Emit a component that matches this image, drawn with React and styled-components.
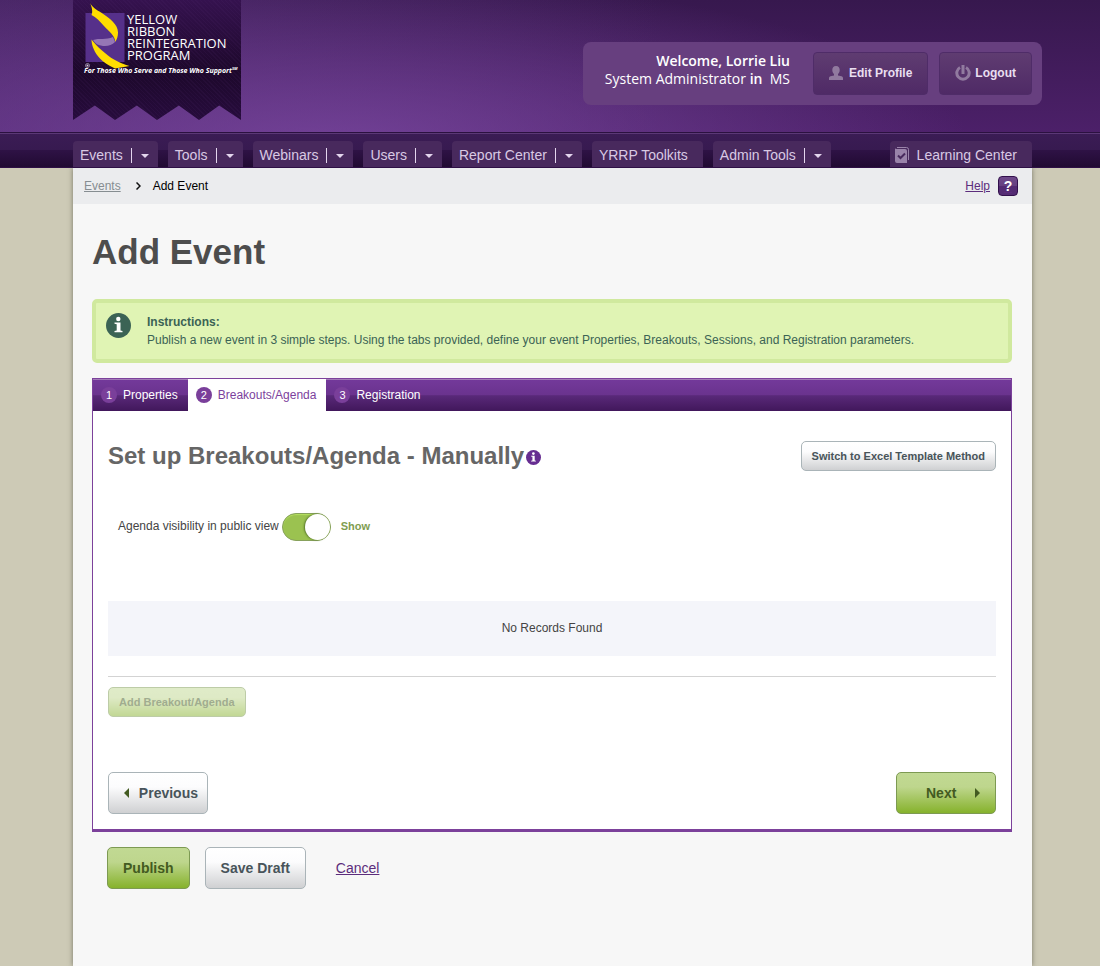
import { useState } from "react";
import styled, { createGlobalStyle } from "styled-components";

const GlobalStyle = createGlobalStyle`
    * {
        box-sizing: border-box;
    }

    body {
        margin: 0;
        background: #cdcab6;
        color: #444;
        font-family: "Liberation Sans", Arial, sans-serif;
        font-size: 12px;
        line-height: 18px;
    }

    button {
        font-family: inherit;
        cursor: pointer;
    }
`;

const Page = styled.div`
    display: flex;
    flex-direction: column;
    min-height: 100vh;
`;

const Wrapper = styled.div`
    width: 100%;
    max-width: 964px;
    margin: 0 auto;
    padding-left: 5px;
`;

const Header = styled.header`
    height: 132px;
    background:
        radial-gradient(ellipse 640px 170px at 30% 110%, rgba(122, 72, 160, 0.8), rgba(90, 48, 130, 0) 100%),
        linear-gradient(90deg, rgba(94, 54, 130, 0.5) 0%, rgba(60, 25, 90, 0) 60%),
        linear-gradient(180deg, #37184e 0%, #4c2069 100%);
`;

const HeaderRow = styled(Wrapper)`
    display: flex;
    justify-content: space-between;
    align-items: flex-start;
`;

const Banner = styled.a`
    display: flex;
    flex-direction: column;
    width: 168px;
    height: 120px;
    padding: 3px 0 0 11px;
    color: #fff;
    text-decoration: none;
    background:
        repeating-linear-gradient(45deg, rgba(90, 50, 120, 0.1) 0 1px, transparent 1px 3px),
        linear-gradient(180deg, #35124f 0%, #1d082b 60%, #270c3d 100%);
    clip-path: polygon(0 0, 100% 0, 100% 100%, 87% 88%, 75% 100%, 63% 88%, 50% 100%, 38% 88%, 25% 100%, 13% 88%, 0 100%);
`;

const LogoRow = styled.div`
    display: flex;
`;

const LogoName = styled.div`
    margin: 10px 0 0 -3px;
    font-family: "Open Sans", "Noto Sans", sans-serif;
    font-size: 13px;
    line-height: 12px;
`;

const Tagline = styled.div`
    font-family: "Open Sans", "Noto Sans", sans-serif;
    font-size: 7px;
    font-weight: bold;
    font-style: italic;
    line-height: 10px;
    white-space: nowrap;
    margin-top: -3px;

    sup {
        font-size: 4px;
        line-height: 4px;
    }
`;

const UserBox = styled.div`
    display: flex;
    align-items: flex-start;
    margin: 42px -10px 0 0;
    padding: 10px;
    height: 63px;
    border-radius: 8px;
    background: #673f7f;
`;

const Welcome = styled.div`
    padding: 0 23px 0 12px;
    color: #fff;
    font-family: "Open Sans", sans-serif;
    font-size: 14px;
    text-align: right;
    white-space: pre;

    b {
        font-weight: 600;
    }
`;

const UserButton = styled.button`
    display: flex;
    align-items: center;
    gap: ${(p) => (p.$spaced ? "4px" : "6px")};
    height: 43px;
    padding: 0 15px 2px;
    margin-left: ${(p) => (p.$spaced ? "11px" : "0")};
    border: 1px solid #4f2c68;
    border-radius: 4px;
    background: linear-gradient(180deg, #5f3c71, #4f2a66);
    color: #e9dff0;
    font-size: 12px;
    font-weight: bold;
`;

const NavBar = styled.nav`
    height: 36px;
    padding-top: 8px;
    border-top: 1px solid #2b1140;
    border-bottom: 1px solid #2e0f45;
    box-shadow: inset 0 1px 0 #5b3876;
    background: linear-gradient(180deg, #3b1c55 0%, #371a50 50%, #2e1245 51%, #210a32 100%);
`;

const NavRow = styled(Wrapper)`
    display: flex;
    gap: 10px;
`;

const NavTab = styled.a`
    display: flex;
    align-items: center;
    height: 26px;
    padding: 2px ${(p) => (p.$menu ? "9px" : "15px")} 0 ${(p) => (p.$learning ? "5px" : "7px")};
    margin-left: ${(p) => (p.$learning ? "auto" : "0")};
    border-radius: 4px 4px 0 0;
    background: #48295d;
    color: #d9c9e4;
    font-size: 14px;
    text-decoration: none;
    white-space: nowrap;

    svg {
        margin-right: 8px;
    }
`;

const NavCaret = styled.span`
    display: flex;
    align-items: center;
    height: 15px;
    margin-left: 8px;
    padding-left: 9px;
    border-left: 1px solid #e4d6ee;

    &::after {
        content: "";
        border: 4px solid transparent;
        border-top-color: #e4d6ee;
        border-bottom: 0;
        margin-top: 2px;
    }
`;

const Body = styled(Wrapper)`
    display: flex;
    flex: 1;
`;

const Sheet = styled.div`
    flex: 1;
    background: #f7f7f7;
    box-shadow: 0 0 5px rgba(60, 60, 50, 0.6);
    clip-path: inset(0 -8px);
`;

const Crumbs = styled.div`
    display: flex;
    align-items: center;
    height: 36px;
    padding: 0 14px 0 11px;
    background: #ebecee;
    color: #000;

    svg {
        margin: 0 12px 0 15px;
    }
`;

const CrumbLink = styled.a`
    color: #868d91;
`;

const HelpLink = styled.a`
    display: flex;
    align-items: center;
    gap: 8px;
    margin-left: auto;
    color: #5c2d7c;
`;

const HelpIcon = styled.span`
    width: 20px;
    height: 20px;
    border: 1px solid #32104c;
    border-radius: 4px;
    background: linear-gradient(180deg, #6e4889 0%, #654080 50%, #532a72 51%, #542c73 100%);
    color: #fff;
    font-size: 14px;
    font-weight: bold;
    line-height: 18px;
    text-align: center;
`;

const Main = styled.main`
    padding: 28px 20px 0 19px;
`;

const Title = styled.h1`
    margin: 0;
    color: #4d4d4d;
    font-size: 35px;
    line-height: 40px;
`;

const Instructions = styled.section`
    display: flex;
    gap: 16px;
    min-height: 64px;
    margin-top: 27px;
    padding: 10px;
    border: 4px solid #d0e99e;
    border-radius: 5px;
    background: #e0f4b4;
    color: #3b6355;

    p {
        margin: 0;
    }
`;

const Panel = styled.section`
    margin-top: 15px;
    border: 1px solid #7c419b;
    border-bottom-width: 3px;
    background: #fff;
`;

const TabBar = styled.div`
    display: flex;
    height: 32px;
    background: linear-gradient(180deg, #a27bb8 0, #a27bb8 1px, #73399a 1px, #6a338e 50%, #592979 52%, #41175b 100%);
`;

const Tab = styled.button`
    display: flex;
    align-items: center;
    gap: 6px;
    padding: 0 10px 0 8px;
    border: 0;
    background: ${(p) => (p.$active ? "#fff" : "transparent")};
    color: ${(p) => (p.$active ? "#7c3f9d" : "#fff")};
    font-size: 12px;
`;

const TabNumber = styled.span`
    width: 16px;
    height: 16px;
    border-radius: 50%;
    background: #7a3f9a;
    color: #fff;
    font-size: 11px;
    line-height: 16px;
    text-align: center;
`;

const PanelBody = styled.div`
    padding: 30px 15px 15px;
`;

const PanelHead = styled.div`
    display: flex;
    justify-content: space-between;
    align-items: center;
`;

const PanelTitle = styled.h2`
    display: flex;
    align-items: center;
    gap: 2px;
    margin: 0;
    color: #666;
    font-size: 24px;
    line-height: 30px;

    svg {
        margin-top: 2px;
    }
`;

const Visibility = styled.label`
    display: flex;
    align-items: center;
    gap: 3px;
    margin: 42px 0 0 10px;
`;

const VisibilityText = styled.span`
    padding-bottom: 2px;
`;

const Switch = styled.input`
    appearance: none;
    width: 49px;
    height: 28px;
    margin: 0;
    border: 1px solid #87a15c;
    border-radius: 14px;
    background: ${(p) => (p.checked ? "#9bc250" : "#ccc")};
    box-shadow: inset 0 1px 1px #b5e05f;
    cursor: pointer;

    &::before {
        content: "";
        display: block;
        width: 25px;
        height: 26px;
        margin-left: ${(p) => (p.checked ? "22px" : "0")};
        border-radius: 50%;
        background: #fff;
        box-shadow: -1px 0 2px #56762a;
    }
`;

const SwitchText = styled.b`
    margin-left: 7px;
    padding-bottom: 2px;
    color: #7f9d50;
    font-size: 11px;
`;

const Empty = styled.div`
    margin-top: 60px;
    padding: 18px 0 19px;
    background: #f4f5fa;
    text-align: center;
`;

const AddRow = styled.div`
    margin-top: 20px;
    padding-top: 10px;
    border-top: 1px solid #d3d3d3;
`;

const Button = styled.button`
    height: ${(p) => (p.$small ? "30px" : "42px")};
    padding: 0 ${(p) => (p.$small ? "10px" : "15px")};
    border: 1px solid ${(p) => (p.$green ? "#7d9a52" : "#aab4b8")};
    border-radius: 5px;
    background: ${(p) =>
        p.$green
            ? "linear-gradient(180deg, #c1d993 0%, #bed68d 35%, #86b22c 100%)"
            : "linear-gradient(180deg, #fff 0%, #fcfcfd 35%, #cfd0d2 100%)"};
    color: ${(p) => (p.$green ? "#435b21" : "#48545a")};
    font-size: ${(p) => (p.$small ? "11px" : "14px")};
    font-weight: bold;

    &:disabled {
        opacity: 0.5;
        cursor: default;
    }
`;

const StepButton = styled(Button)`
    display: flex;
    align-items: center;
    justify-content: space-between;
    width: 100px;
    padding: ${(p) => (p.$green ? "0 15px 0 29px" : "0 9px 0 15px")};
`;

const Steps = styled.div`
    display: flex;
    justify-content: space-between;
    margin-top: 55px;
`;

const Actions = styled.div`
    display: flex;
    align-items: center;
    gap: 15px;
    padding: 15px;
`;

const Cancel = styled.a`
    margin-left: 15px;
    color: #5c2d7c;
    font-size: 14px;
`;

const menu = [
    { name: "Events", sub: true },
    { name: "Tools", sub: true },
    { name: "Webinars", sub: true },
    { name: "Users", sub: true },
    { name: "Report Center", sub: true },
    { name: "YRRP Toolkits", sub: false },
    { name: "Admin Tools", sub: true },
];

const tabs = ["Properties", "Breakouts/Agenda", "Registration"];

function RibbonLogo() {
    return (
        <svg width="46" height="66" viewBox="0 0 46 66">
            <rect x="1.500" y="10" width="39" height="49" fill="#56308a" />
            <path d="M9 37c6-2 13 0 20-3l2 5c-3 3-7 4.500-12 4-5-.5-8-2.500-10-6z" fill="#9576b5" />
            <path d="M6 0c3 5 7 7 11 9.500 9 6 17 12 17 20 0 4-1 7-3 9.500.5-6-6-10.500-11.500-16.500C16 18.500 12 14 7.500 12c1.500-3 .5-8-1.500-12z" fill="#fd0" />
            <path d="M7.500 36.500c3 4 6 7 10.500 11 4 3.500 8 7 12 9 5 3 10 5 15.500 6.500L31 65.500C25 62.500 19 59 15.500 55 11 50 7.500 43 7.500 36.500z" fill="#fd0" />
            <circle cx="3.500" cy="62.500" r="2" fill="none" stroke="#d8cce2" strokeWidth=".6" />
            <circle cx="3.500" cy="62.500" r="1" fill="#d8cce2" />
        </svg>
    );
}

function UserIcon() {
    return (
        <svg width="14" height="14" viewBox="0 0 14 14" fill="#917a9f">
            <path d="M7 0c2.700 0 3.700 1.800 3.700 4 0 1.700-.6 3.200-1.700 4v1.500l3.500.8c.9.300 1.500.9 1.500 1.700v2H0v-2c0-.8.600-1.400 1.500-1.700L5 9.500V8C3.900 7.200 3.300 5.700 3.300 4c0-2.200 1-4 3.700-4z" />
        </svg>
    );
}

function PowerIcon() {
    return (
        <svg width="16" height="16" viewBox="0 0 16 16" fill="none" stroke="#917a9f" strokeWidth="3">
            <path d="M5 2.500a6.200 6.200 0 1 0 6 0" />
            <path d="M8 0v9" />
        </svg>
    );
}

function BookIcon() {
    return (
        <svg width="14" height="16" viewBox="0 0 14 16">
            <path d="M2 .5h9.500q2 0 2 2V13" fill="none" stroke="#9a83aa" />
            <path d="M1.500 2H10q2 0 2 2v12H2q-2 0-2-2V1q0 1 1.500 1z" fill="#9a83aa" />
            <path d="M3 8.500l2.500 2.500L10 6.500" fill="none" stroke="#48295d" strokeWidth="2" />
        </svg>
    );
}

function InfoIcon({ size, color }) {
    return (
        <svg width={size} height={size} viewBox="0 0 25 25">
            <circle cx="12.500" cy="12.500" r="12.500" fill={color} />
            <circle cx="12.300" cy="6" r="2.200" fill="#fff" />
            <path d="M8.500 9.500h6v8l2 .5v1.200h-8V18l2.200-.5v-6.300l-2.200-.5z" fill="#fff" />
        </svg>
    );
}

function App() {
    const [active, setActive] = useState(1);
    const [show, setShow] = useState(true);

    return (
        <Page>
            <GlobalStyle />
            <Header>
                <HeaderRow>
                    <Banner href="#">
                        <LogoRow>
                            <RibbonLogo />
                            <LogoName>
                                YELLOW<br />RIBBON<br />REINTEGRATION<br />PROGRAM
                            </LogoName>
                        </LogoRow>
                        <Tagline>For Those Who Serve and Those Who Support<sup>SM</sup></Tagline>
                    </Banner>
                    <UserBox>
                        <Welcome>
                            <b>Welcome, Lorrie Liu</b>
                            <br />
                            System Administrator <b>in</b>{"  "}MS
                        </Welcome>
                        <UserButton><UserIcon />Edit Profile</UserButton>
                        <UserButton $spaced><PowerIcon />Logout</UserButton>
                    </UserBox>
                </HeaderRow>
            </Header>
            <NavBar>
                <NavRow>
                    {menu.map((item) => (
                        <NavTab href="#" key={item.name} $menu={item.sub}>
                            {item.name}
                            {item.sub && <NavCaret />}
                        </NavTab>
                    ))}
                    <NavTab href="#" $learning><BookIcon />Learning Center</NavTab>
                </NavRow>
            </NavBar>
            <Body>
                <Sheet>
                    <Crumbs>
                        <CrumbLink href="#">Events</CrumbLink>
                        <svg width="5" height="8" viewBox="0 0 5 8" fill="none" stroke="#111" strokeWidth="1.500">
                            <path d="M.5.5L4 4 .5 7.500" />
                        </svg>
                        Add Event
                        <HelpLink href="#">Help <HelpIcon>?</HelpIcon></HelpLink>
                    </Crumbs>
                    <Main>
                        <Title>Add Event</Title>
                        <Instructions>
                            <InfoIcon size={25} color="#3b6355" />
                            <div>
                                <b>Instructions:</b>
                                <p>
                                    Publish a new event in 3 simple steps. Using the tabs provided, define your event
                                    Properties, Breakouts, Sessions, and Registration parameters.
                                </p>
                            </div>
                        </Instructions>
                        <Panel>
                            <TabBar>
                                {tabs.map((tab, index) => (
                                    <Tab key={tab} $active={active === index} onClick={() => setActive(index)}>
                                        <TabNumber>{index + 1}</TabNumber>
                                        {tab}
                                    </Tab>
                                ))}
                            </TabBar>
                            <PanelBody>
                                <PanelHead>
                                    <PanelTitle>
                                        Set up Breakouts/Agenda - Manually
                                        <InfoIcon size={15} color="#662d91" />
                                    </PanelTitle>
                                    <Button $small>Switch to Excel Template Method</Button>
                                </PanelHead>
                                <Visibility>
                                    <VisibilityText>Agenda visibility in public view</VisibilityText>
                                    <Switch type="checkbox" checked={show} onChange={() => setShow(!show)} />
                                    <SwitchText>{show ? "Show" : "Hide"}</SwitchText>
                                </Visibility>
                                <Empty>No Records Found</Empty>
                                <AddRow>
                                    <Button $small $green disabled>Add Breakout/Agenda</Button>
                                </AddRow>
                                <Steps>
                                    <StepButton>
                                        <svg width="5" height="10" viewBox="0 0 5 10" fill="#435b21">
                                            <path d="M5 0v10L0 5z" />
                                        </svg>
                                        Previous
                                    </StepButton>
                                    <StepButton $green>
                                        Next
                                        <svg width="5" height="10" viewBox="0 0 5 10" fill="#435b21">
                                            <path d="M0 0v10l5-5z" />
                                        </svg>
                                    </StepButton>
                                </Steps>
                            </PanelBody>
                        </Panel>
                        <Actions>
                            <Button $green>Publish</Button>
                            <Button>Save Draft</Button>
                            <Cancel href="#">Cancel</Cancel>
                        </Actions>
                    </Main>
                </Sheet>
            </Body>
        </Page>
    );
}

export default App;
